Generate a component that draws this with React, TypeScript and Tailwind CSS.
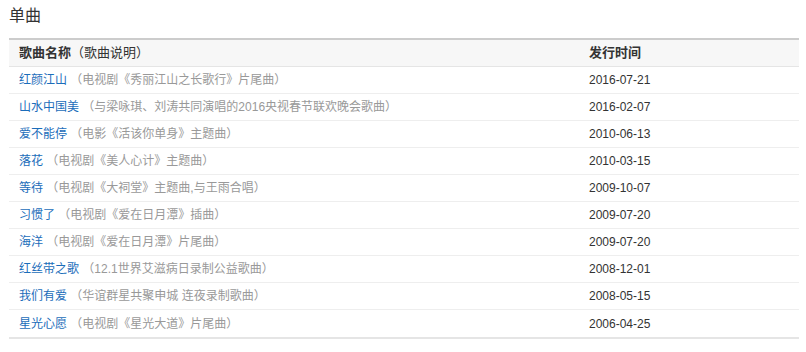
import React from 'react';

type Song = {
  name: string;
  note: string;
  date: string;
};

const songs: Song[] = [
  { name: '红颜江山', note: '（电视剧《秀丽江山之长歌行》片尾曲）', date: '2016-07-21' },
  { name: '山水中国美', note: '（与梁咏琪、刘涛共同演唱的2016央视春节联欢晚会歌曲）', date: '2016-02-07' },
  { name: '爱不能停', note: '（电影《活该你单身》主题曲）', date: '2010-06-13' },
  { name: '落花', note: '（电视剧《美人心计》主题曲）', date: '2010-03-15' },
  { name: '等待', note: '（电视剧《大祠堂》主题曲,与王雨合唱）', date: '2009-10-07' },
  { name: '习惯了', note: '（电视剧《爱在日月潭》插曲）', date: '2009-07-20' },
  { name: '海洋', note: '（电视剧《爱在日月潭》片尾曲）', date: '2009-07-20' },
  { name: '红丝带之歌', note: '（12.1世界艾滋病日录制公益歌曲）', date: '2008-12-01' },
  { name: '我们有爱', note: '（华谊群星共聚申城 连夜录制歌曲）', date: '2008-05-15' },
  { name: '星光心愿', note: '（电视剧《星光大道》片尾曲）', date: '2006-04-25' },
];

const font = "font-['Liberation_Sans','Noto_Sans_CJK_SC',sans-serif]";

const App: React.FC = () => {
  return (
    <div className={`w-[806px] h-[352px] bg-white pt-[4px] ${font}`}>
      <h2 className="pl-[9px] text-[16px] leading-[24px] text-[#333]">单曲</h2>

      <div className="mx-[9px] mt-[10px] w-[790px] border-t-2 border-b-2 border-t-[#cccccc] border-b-[#e5e5e5]">
        {/* header */}
        <div className="grid grid-cols-[570px_1fr] h-[27px] items-center bg-[#f7f7f7] border-b border-[#e5e5e5] text-[13px] text-[#333]">
          <div className="pl-[10px]">
            <span className="font-bold">歌曲名称</span>
            <span>（歌曲说明）</span>
          </div>
          <div className="pl-[10px] font-bold">发行时间</div>
        </div>

        {songs.map((song, i) => (
          <div
            key={song.name + song.date}
            className={`grid grid-cols-[570px_1fr] h-[27px] items-center text-[12px] ${
              i < songs.length - 1 ? 'border-b border-[#eeeeee]' : ''
            }`}
          >
            <div className="pl-[10px] whitespace-nowrap">
              <span className="text-[#1b6dba]">{song.name}</span>
              <span className="text-[#999]"> {song.note}</span>
            </div>
            <div className="pl-[10px] text-[#333]">{song.date}</div>
          </div>
        ))}
      </div>
    </div>
  );
};

export default App;
